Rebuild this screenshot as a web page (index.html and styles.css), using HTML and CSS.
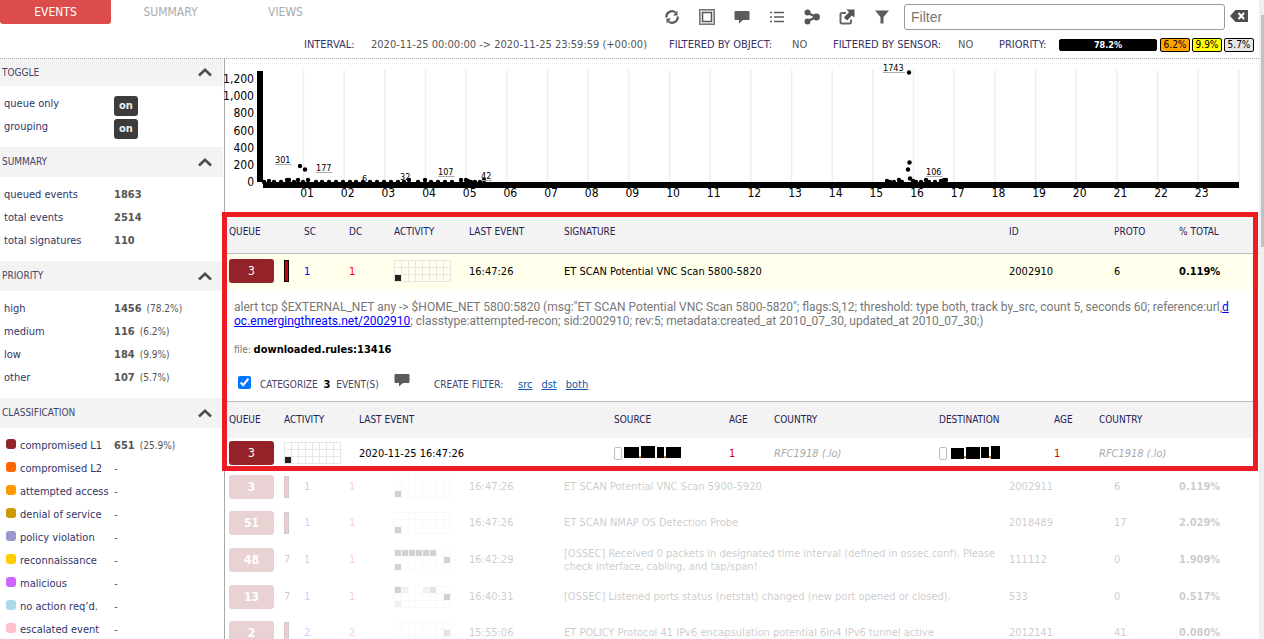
FILE: index.html
```html
<!DOCTYPE html>
<html lang="en">
<head>
<meta charset="utf-8">
<title>Events</title>
<link rel="stylesheet" href="styles.css">
</head>
<body>
<svg class="defs" aria-hidden="true">
  <symbol id="grid" viewBox="0 0 57 22"><path d="M0 .5H57M0 7.5H57M0 14.5H57M0 21.5H57M.5 0V22M7.5 0V22M14.5 0V22M21.5 0V22M28.5 0V22M35.5 0V22M42.5 0V22M49.5 0V22M56.5 0V22" fill="none" stroke="#e6e6e6"/></symbol>
  <symbol id="up" viewBox="0 0 14 9"><path d="M1 7.5L7 1.8L13 7.5" fill="none" stroke="#4d4d4d" stroke-width="2.6"/></symbol>
  <symbol id="talk" viewBox="0 0 16 14"><path d="M1.5 1H14.5Q15.500 1 15.500 2V9Q15.500 10 14.500 10H9L5 13.500V10H1.500Q.5 10 .5 9V2Q.5 1 1.500 1Z" fill="#5c5c5c"/></symbol>
</svg>
<header class="top">
  <div class="bar">
    <nav class="tabs">
      <a href="#events" class="tab active">EVENTS</a>
      <a href="#summary" class="tab">SUMMARY</a>
      <a href="#views" class="tab">VIEWS</a>
    </nav>
    <div class="tools">
      <button class="tool" aria-label="Refresh"><svg width="16" height="16" viewBox="0 0 16 16" fill="none" stroke="#5c5c5c" stroke-width="2.2"><path d="M2.300 8.500A5.700 5.700 0 0 1 11.500 3.500M13.700 7.500A5.700 5.700 0 0 1 4.500 12.500"/><path d="M13.500 1.500V6.500H9ZM2.500 14.500V9.500H7Z" fill="#5c5c5c" stroke="none"/></svg></button>
      <button class="tool" aria-label="Select"><svg width="16" height="16" viewBox="0 0 16 16" fill="none"><rect x="1" y="1" width="14" height="14" stroke="#aaa" stroke-width="2"/><rect x=".5" y=".5" width="15" height="15" stroke="#777"/><rect x="3.500" y="3.500" width="9" height="9" stroke="#555" stroke-width="1.500"/></svg></button>
      <button class="tool" aria-label="Comment"><svg width="16" height="14"><use href="#talk"/></svg></button>
      <button class="tool" aria-label="List"><svg width="16" height="14" viewBox="0 0 16 14"><path d="M1 2.500H3M1 7H3M1 11.500H3M5 2.500H15M5 7H15M5 11.500H15" stroke="#5c5c5c" stroke-width="1.600"/></svg></button>
      <button class="tool" aria-label="Relations"><svg width="16" height="16" viewBox="0 0 16 16" fill="#555"><path d="M4 4L12 8L4 12" fill="none" stroke="#555" stroke-width="2.400"/><circle cx="3.500" cy="3.600" r="3"/><circle cx="12.500" cy="8" r="3.400"/><circle cx="3.500" cy="12.400" r="3"/></svg></button>
      <button class="tool" aria-label="Open"><svg width="16" height="16" viewBox="0 0 16 16"><path d="M7 4H3Q1.500 4 1.500 5.500V13Q1.500 14.500 3 14.500H10.500Q12 14.500 12 13V10.500" fill="none" stroke="#666" stroke-width="2"/><path d="M7.500 .5H15.500V8.500L13 6.500L8 11.500L4.800 8.500L10 3.200Z" fill="#555"/></svg></button>
      <button class="tool" aria-label="Filter"><svg width="16" height="14" viewBox="0 0 16 14"><path d="M1 .5H15L9.500 7V13.500H6.500V7Z" fill="#5c5c5c"/></svg></button>
    </div>
    <input class="filter" type="text" placeholder="Filter" aria-label="Filter">
    <button class="clear" aria-label="Clear filter"><svg width="18" height="12" viewBox="0 0 18 12"><path d="M5.500 0H18V12H5.500L0 6Z" fill="#4d4d4d"/><path d="M8.500 3L14 9M14 3L8.500 9" stroke="#fff" stroke-width="2"/></svg></button>
  </div>
  <dl class="status">
    <dt>INTERVAL:</dt><dd>2020-11-25 00:00:00 -&gt; 2020-11-25 23:59:59 (+00:00)</dd>
    <dt>FILTERED BY OBJECT:</dt><dd>NO</dd>
    <dt>FILTERED BY SENSOR:</dt><dd>NO</dd>
    <dt>PRIORITY:</dt><dd class="chips"><span class="chip high">78.2%</span><span class="chip med">6.2%</span><span class="chip low">9.9%</span><span class="chip oth">5.7%</span></dd>
  </dl>
</header>
<div class="page">
  <aside class="side">
    <section class="first">
      <h2>TOGGLE <svg width="14" height="9"><use href="#up"/></svg></h2>
      <dl>
        <dt>queue only</dt><dd><button class="on">on</button></dd>
        <dt>grouping</dt><dd><button class="on">on</button></dd>
      </dl>
    </section>
    <section>
      <h2>SUMMARY <svg width="14" height="9"><use href="#up"/></svg></h2>
      <dl>
        <dt>queued events</dt><dd><b>1863</b></dd>
        <dt>total events</dt><dd><b>2514</b></dd>
        <dt>total signatures</dt><dd><b>110</b></dd>
      </dl>
    </section>
    <section>
      <h2>PRIORITY <svg width="14" height="9"><use href="#up"/></svg></h2>
      <dl>
        <dt>high</dt><dd><b>1456</b><small>(78.2%)</small></dd>
        <dt>medium</dt><dd><b>116</b><small>(6.2%)</small></dd>
        <dt>low</dt><dd><b>184</b><small>(9.9%)</small></dd>
        <dt>other</dt><dd><b>107</b><small>(5.7%)</small></dd>
      </dl>
    </section>
    <section>
      <h2>CLASSIFICATION <svg width="14" height="9"><use href="#up"/></svg></h2>
      <dl>
        <dt><i class="sw c1"></i>compromised L1</dt><dd><b>651</b><small>(25.9%)</small></dd>
        <dt><i class="sw c2"></i>compromised L2</dt><dd>-</dd>
        <dt><i class="sw c3"></i>attempted access</dt><dd>-</dd>
        <dt><i class="sw c4"></i>denial of service</dt><dd>-</dd>
        <dt><i class="sw c5"></i>policy violation</dt><dd>-</dd>
        <dt><i class="sw c6"></i>reconnaissance</dt><dd>-</dd>
        <dt><i class="sw c7"></i>malicious</dt><dd>-</dd>
        <dt><i class="sw c8"></i>no action req’d.</dt><dd>-</dd>
        <dt><i class="sw c9"></i>escalated event</dt><dd>-</dd>
      </dl>
    </section>
  </aside>
  <main class="main">
    <svg class="chart" id="chart" viewBox="225 59 1034 157" role="img" aria-label="Events per hour"></svg>
    <div class="wrap">
      <table class="events">
        <colgroup><col class="w59"><col class="w20"><col class="w45"><col class="w45"><col class="w75"><col class="w95"><col><col class="w105"><col class="w65"><col class="w80"></colgroup>
        <thead><tr><th>QUEUE</th><th></th><th>SC</th><th>DC</th><th>ACTIVITY</th><th>LAST EVENT</th><th>SIGNATURE</th><th>ID</th><th>PROTO</th><th>% TOTAL</th></tr></thead>
        <tbody>
          <tr class="open"><td><span class="queue">3</span></td><td><span class="flag"></span></td><td class="sc">1</td><td class="dc">1</td><td><svg class="act" width="57" height="22"><use href="#grid"/><rect x="1" y="15" width="6" height="6"/></svg></td><td>16:47:26</td><td>ET SCAN Potential VNC Scan 5800-5820</td><td>2002910</td><td>6</td><td><b>0.119%</b></td></tr>
          <tr class="detail"><td colspan="10">
            <p class="rule">alert tcp $EXTERNAL_NET any -&gt; $HOME_NET 5800:5820 (msg:"ET SCAN Potential VNC Scan 5800-5820"; flags:S,12; threshold: type both, track by_src, count 5, seconds 60; reference:url,<a href="#rule">d<br>oc.emergingthreats.net/2002910</a>; classtype:attempted-recon; sid:2002910; rev:5; metadata:created_at 2010_07_30, updated_at 2010_07_30;)</p>
            <p class="file">file: <b>downloaded.rules:13416</b></p>
            <div class="actions">
              <input type="checkbox" id="cat" checked><label for="cat">CATEGORIZE <b>3</b> EVENT(S)</label>
              <button class="note" aria-label="Comment"><svg width="16" height="14"><use href="#talk"/></svg></button>
              <span class="create">CREATE FILTER:</span>
              <a href="#src">src</a><a href="#dst">dst</a><a href="#both">both</a>
            </div>
            <table class="group">
              <colgroup><col class="w59"><col class="w75"><col class="w255"><col class="w115"><col class="w45"><col class="w165"><col class="w115"><col class="w45"><col></colgroup>
              <thead><tr><th>QUEUE</th><th>ACTIVITY</th><th>LAST EVENT</th><th>SOURCE</th><th>AGE</th><th>COUNTRY</th><th>DESTINATION</th><th>AGE</th><th>COUNTRY</th></tr></thead>
              <tbody><tr><td><span class="queue">3</span></td><td><svg class="act" width="57" height="22"><use href="#grid"/><rect x="1" y="15" width="6" height="6"/></svg></td><td>2020-11-25 16:47:26</td>
                <td><svg class="ip" width="70" height="16" viewBox="0 0 70 16"><rect x=".5" y="2.500" width="7" height="12" rx="1.500" fill="#fff" stroke="#bbb"/><path d="M10 2H25V13H10ZM27 1H41V13H27ZM43 2H50V13H43ZM52 2H67V13H52Z"/><path d="M25 11h2v2h-2zM50 11h2v2h-2z" fill="#c48a20"/></svg></td>
                <td class="age">1</td><td class="cc">RFC1918 (.lo)</td>
                <td><svg class="ip" width="70" height="16" viewBox="0 0 70 16"><rect x=".5" y="2.500" width="7" height="12" rx="1.500" fill="#fff" stroke="#bbb"/><path d="M12 3H25V14H12ZM27 2H41V14H27ZM42 2H50V13H42ZM52 1H61V14H52Z"/><path d="M25 11h2v2h-2zM50 11h2v2h-2z" fill="#c48a20"/></svg></td>
                <td class="age">1</td><td class="cc">RFC1918 (.lo)</td></tr></tbody>
            </table>
          </td></tr>
          <tr class="dim"><td><span class="queue">3</span></td><td><span class="flag"></span></td><td class="sc">1</td><td class="dc">1</td><td><svg class="act" width="57" height="22"><use href="#grid"/><rect x="1" y="15" width="6" height="6"/></svg></td><td>16:47:26</td><td>ET SCAN Potential VNC Scan 5900-5920</td><td>2002911</td><td>6</td><td><b>0.119%</b></td></tr>
          <tr class="dim"><td><span class="queue">51</span></td><td><span class="flag"></span></td><td class="sc">1</td><td class="dc">1</td><td><svg class="act" width="57" height="22"><use href="#grid"/><rect x="1" y="15" width="6" height="6"/></svg></td><td>16:47:26</td><td>ET SCAN NMAP OS Detection Probe</td><td>2018489</td><td>17</td><td><b>2.029%</b></td></tr>
          <tr class="dim tall"><td><span class="queue">48</span></td><td>7</td><td class="sc">1</td><td class="dc">1</td><td><svg class="act" width="57" height="22"><use href="#grid"/><path d="M1 1h6v6h-6zM8 1h6v6h-6zM15 1h6v6h-6zM22 1h6v6h-6zM29 1h6v6h-6zM36 1h6v6h-6zM50 8h6v6h-6zM1 15h6v6h-6z"/></svg></td><td>16:42:29</td><td>[OSSEC] Received 0 packets in designated time interval (defined in ossec.conf). Please<br>check interface, cabling, and tap/span!</td><td>111112</td><td>0</td><td><b>1.909%</b></td></tr>
          <tr class="dim"><td><span class="queue">13</span></td><td>7</td><td class="sc">1</td><td class="dc">1</td><td><svg class="act" width="57" height="22"><use href="#grid"/><path d="M1 1h6v6h-6zM50 8h6v6h-6z"/><path d="M8 1h6v6h-6zM29 1h6v6h-6zM1 15h6v6h-6z" opacity=".3"/><path d="M36 1h6v6h-6z" opacity=".6"/></svg></td><td>16:40:31</td><td>[OSSEC] Listened ports status (netstat) changed (new port opened or closed).</td><td>533</td><td>0</td><td><b>0.517%</b></td></tr>
          <tr class="dim"><td><span class="queue">2</span></td><td><span class="flag"></span></td><td class="sc">2</td><td class="dc">2</td><td><svg class="act" width="57" height="22"><use href="#grid"/><rect x="50" y="8" width="6" height="6" opacity=".6"/></svg></td><td>15:55:06</td><td>ET POLICY Protocol 41 IPv6 encapsulation potential 6in4 IPv6 tunnel active</td><td>2012141</td><td>41</td><td><b>0.080%</b></td></tr>
        </tbody>
      </table>
      <div class="mark"></div>
    </div>
  </main>
</div>
<div class="scroll"><div class="thumb"></div></div>
<script src="chart.js"></script>
</body>
</html>
```
FILE: styles.css
```css
* { box-sizing: border-box; }
body { margin: 0; height: 100vh; overflow: hidden; padding-right: 5px; background: #fff; color: #000; font: 11px/14px "DejaVu Sans Condensed", "Noto Sans", sans-serif; }
button { border: 0; padding: 0; background: none; font: inherit; cursor: pointer; display: block; }
svg { display: block; }
p, dl, dd, h2 { margin: 0; }
.defs { position: absolute; width: 0; height: 0; }
.top { height: 59px; border-bottom: 1px dotted #aaa; }
.bar { display: flex; height: 34px; }
.tabs { display: flex; flex: 1; gap: 4px; }
.tab { width: 111px; height: 24px; line-height: 24px; text-align: center; color: #aaa; text-decoration: none; font-size: 12px; }
.tab.active { background: #dc4c4c; color: #fff; border-radius: 0 0 3px 3px; }
.tools { display: flex; margin-right: 5px; }
.tool { width: 35px; height: 34px; display: flex; align-items: center; justify-content: center; }
.filter { width: 321px; height: 26px; margin-top: 4px; padding: 0 6px; border: 1px solid #999; border-radius: 3px; font: 14px "Liberation Sans", sans-serif; }
.filter::placeholder { color: #777; }
.clear { margin: 0 11px 0 5px; height: 32px; }
.status { display: grid; grid-template-columns: 67px 298px 123px 41px 125px 41px 60px auto; justify-content: end; align-items: center; padding: 4px 5px 0 0; white-space: nowrap; }
.status dt { color: #336; }
.status dd { color: #555; }
.chips { display: flex; gap: 2px; }
.chip { width: 30px; height: 14px; border: 1px solid #000; border-radius: 2px; text-align: center; font-size: 10px; line-height: 12px; color: #000; }
.chip.high { width: 98px; height: 12px; line-height: 10px; margin: 1px 1px 0 0; background: #000; color: #fff; font-weight: bold; font-size: 9px; }
.chip.med { background: #ffa500; }
.chip.low { background: #ff0; }
.chip.oth { background: #e6e6e6; }
.page { display: flex; height: calc(100vh - 59px); overflow: hidden; }
.side { width: 225px; flex: none; border-right: 1px solid #aaa; }
.side h2 { display: flex; justify-content: space-between; align-items: center; height: 30px; margin-right: 1px; padding: 0 11px 0 2px; background: #f3f3f3; color: #446; font-size: 10px; font-weight: normal; }
.side .first h2 { height: 27px; }
.side dl { display: grid; grid-template-columns: 110px 1fr; grid-auto-rows: 23px; align-items: center; padding: 6px 0 9px 4px; color: #336; white-space: nowrap; }
.side dt { display: flex; gap: 4px; }
.side dd { color: #555; }
.side small { margin-left: 5px; font-size: 10px; }
.sw { width: 10px; height: 10px; margin-left: 2px; border-radius: 3px; }
.c1 { background: #942229; } .c2 { background: #f60; } .c3 { background: #f90; }
.c4 { background: #c90; } .c5 { background: #99c; } .c6 { background: #fc0; }
.c7 { background: #c6f; } .c8 { background: #add8e6; } .c9 { background: #ffc0cb; }
.on { width: 24px; height: 20px; margin-top: 4px; border-radius: 3px; background: #3c3c3c; color: #eee; font-weight: bold; }
.main { flex: 1; min-width: 0; }
.chart { width: 100%; overflow: visible; }
.lab { font-size: 12px; }
.pt { font-size: 9px; }
.wrap { position: relative; }
table { width: 100%; table-layout: fixed; border-collapse: collapse; }
td { padding: 0; height: 36px; vertical-align: middle; line-height: 13px; white-space: nowrap; }
th { padding: 0 0 4px; height: 37px; background: #f3f3f3; border-bottom: 1px solid #bbb; color: #225; font-size: 10px; font-weight: normal; text-align: left; white-space: nowrap; }
th:first-child, td:first-child { padding-left: 4px; }
.w20 { width: 20px; } .w45 { width: 45px; } .w59 { width: 59px; } .w65 { width: 65px; } .w75 { width: 75px; } .w80 { width: 80px; } .w95 { width: 95px; }
.w105 { width: 105px; } .w115 { width: 115px; } .w165 { width: 165px; } .w255 { width: 255px; }
.queue { display: block; width: 45px; height: 24px; border-radius: 3px; background: #942229; color: #fff; text-align: center; line-height: 24px; font-size: 12px; }
.flag { display: block; width: 5px; height: 22px; border: 1px solid #000; background: #c00; }
.sc { color: #00f; }
.dc { color: #f00; }
.act { fill: #222; }
.open td { background: #ffffeb; }
.detail > td:first-child { padding: 0; height: auto; white-space: normal; }
.rule { padding: 11px 4px 0 9px; color: #777; font: 12px/14px Roboto, sans-serif; white-space: nowrap; }
.rule a { color: #00f; }
.file { padding: 15px 9px 0; color: #777; font-size: 10px; line-height: 14px; }
.file b { color: #000; font-size: 11px; }
.actions { display: flex; align-items: center; height: 44px; padding: 10px 0 0 13px; color: #446; font-size: 10px; }
.actions input { width: 13px; height: 13px; margin: 0 9px 4px 0; }
.actions b { margin: 0 3px; color: #000; font-size: 11px; }
.actions label { width: 134px; }
.actions a { margin-left: 9px; color: #15a; font-size: 11px; }
.note { margin-bottom: 8px; }
.create { width: 75px; margin-left: 24px; white-space: nowrap; }
.group { border-top: 1px solid #bbb; }
.group th { height: 36px; padding-bottom: 0; border: 0; }
.group td { height: 31px; }
.age { color: #c00; }
.cc { color: #aaa; font-style: italic; }
.dim { opacity: .2; }
.dim .queue { font-weight: bold; }
.tall td { height: 38px; }
.mark { position: absolute; top: -4px; left: -3px; right: 1px; height: 259px; border: 5px solid #ed1c24; pointer-events: none; }
.scroll { position: absolute; top: 0; right: 0; bottom: 0; width: 5px; padding: 15px 0 0 2px; background: #f0f0f0; }
.thumb { height: 232px; background: #c1c1c1; }
```
FILE: chart.js
```js
const chart = document.getElementById('chart');
const parts = [];
const step = 40.67;
for (let i = 0; i < 24; i++) {
  const x = 303.5 + i * step;
  parts.push(`<path d="M${x} 70V182" stroke="#eee" stroke-width="1.5"/>`);
  if (i < 23) parts.push(`<text class="lab" x="${x + 3.5}" y="197" text-anchor="middle">${String(i + 1).padStart(2, '0')}</text>`);
}
parts.push('<path d="M257 71h6v111h976v6H263v-6h-6z"/>');
['1,200', '1,000', '800', '600', '400', '200', '0'].forEach((t, i) => {
  parts.push(`<text class="lab" x="254" y="${Math.round(83 + i * 17.2)}" text-anchor="end">${t}</text>`);
});
const points = [[300, 166], [305, 169.5], [909, 72.5], [909.5, 162.500], [908, 169.500],
  [264, 182], [269, 181], [274, 182], [281, 182], [287, 180], [289, 180], [294, 182], [298, 180], [303, 182], [308, 180],
  [316, 182], [322, 182], [329, 182], [336, 182], [343, 182], [350, 182], [356, 182], [363, 182], [370, 182], [377, 182],
  [384, 182], [391, 182], [398, 182], [404, 182], [409, 180], [418, 182], [425, 180], [431, 182], [438, 182], [445, 182],
  [452, 182], [461, 180], [466, 180], [468, 181], [471, 182], [475, 182], [480, 182], [484, 180], [887, 181], [890, 182], [894, 182], [899, 180],
  [902, 182], [910, 178.500], [913, 181], [916, 182], [921, 182], [926, 180], [929, 182], [935, 182], [941, 181], [944, 180], [946, 180]];
points.forEach(([x, y]) => parts.push(`<circle cx="${x}" cy="${y}" r="2.2"/>`));
[['301', 275, 163, 1], ['177', 316, 171, 1], ['6', 362, 182, 0], ['32', 400, 180, 0], ['107', 438, 175, 1],
  ['42', 481, 179, 1], ['1743', 883, 71, 1], ['106', 926, 175, 1]].forEach(([t, x, y, line]) => {
  parts.push(`<text class="pt" x="${x}" y="${y}">${t}</text>`);
  if (line) parts.push(`<path d="M${x} ${y + 1.5}h${t.length * 5.5}" stroke="#aaa"/>`);
});
chart.innerHTML = parts.join('');
```
